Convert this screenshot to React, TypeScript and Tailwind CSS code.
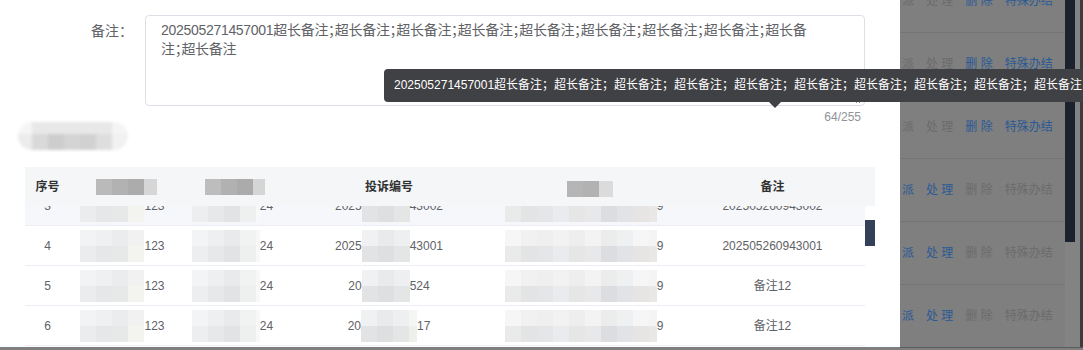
import React from 'react';

type Block = [number, string];

const fontStack = "font-['Liberation_Sans','Noto_Sans_CJK_SC',sans-serif]";

// pixelated redaction blocks, as in the screenshot
const Mosaic = ({ rows, h = 16 }: { rows: Block[][]; h?: number }) => (
  <span className="inline-flex flex-col shrink-0">
    {rows.map((row, i) => (
      <span key={i} className="flex">
        {row.map(([w, c], j) => (
          <span key={j} style={{ width: w, height: h, backgroundColor: c }} />
        ))}
      </span>
    ))}
  </span>
);

const b = (colors: string[], last?: number): Block[] =>
  colors.map((c, i) => [i === colors.length - 1 && last ? last : 16, c]);

const m2: Block[][] = [
  b(['#f2f3f4', '#eff0f1', '#ebeced', '#f1f1f1']),
  b(['#ebecee', '#e6e7e9', '#e7e8e8', '#f3f4ef']),
];
const m3: Block[][] = [
  b(['#f3f4f5', '#eeeff1', '#e9eaec', '#f1f2f2', '#f7f7f7'], 4),
  b(['#edeef0', '#e7e8ea', '#e2e3e5', '#eeefef', '#f8f8f8'], 4),
];
const m4 = (w: number): Block[][] => [
  b(['#f0f1f2', '#e9eaeb', '#eeeff0', '#f5f6f3'], w - 48),
  b(['#e2e3e5', '#dedfe1', '#e4e6e6', '#eef0ec'], w - 48),
];
const m5: Block[][] = [
  b(['#f6f6f7', '#f1f1f2', '#efeff0', '#f2f2f3', '#eeeeef', '#f3f3f4', '#ececed', '#eff0f1', '#f6f6f6', '#f4f4f4'], 8),
  b(['#eaeaeb', '#e3e4e5', '#e5e6e8', '#e9ebee', '#e6e6e7', '#e8e7e9', '#dcdde0', '#e2e3e6', '#e6e5e3', '#e9e8e7'], 8),
];

const colW = ['w-[45px]', 'w-[105px]', 'w-[115px]', 'w-[198px]', 'w-[192px]', 'w-[185px]'];

type Row = { no: string; c4: [string, number, string]; note: string; bg?: boolean };

const rows: Row[] = [
  { no: '3', c4: ['2025', 43, '43002'], note: '202505260943002', bg: true },
  { no: '4', c4: ['2025', 43, '43001'], note: '202505260943001' },
  { no: '5', c4: ['20', 45, '524'], note: '备注12' },
  { no: '6', c4: ['20', 56, '17'], note: '备注12' },
];

type Act = [string, boolean];
const bgRows: Act[][] = [
  [['派', false], ['处 理', false], ['删 除', true], ['特殊办结', true]],
  [['派', false], ['处 理', false], ['删 除', true], ['特殊办结', true]],
  [['派', false], ['处 理', false], ['删 除', true], ['特殊办结', true]],
  [['派', true], ['处 理', true], ['删 除', false], ['特殊办结', false]],
  [['派', true], ['处 理', true], ['删 除', false], ['特殊办结', false]],
  [['派', true], ['处 理', true], ['删 除', false], ['特殊办结', false]],
];

const note =
  '202505271457001' + '超长备注；'.repeat(9) + '超长备注';

export default function App() {
  return (
    <div className={`relative w-[1083px] h-[350px] overflow-hidden flex bg-[#7f7f7f] ${fontStack}`}>
      {/* dialog */}
      <div className="w-[900px] h-[347px] bg-white shrink-0">
        <div className="flex pt-[15px]">
          <div className="w-[145px] pr-[12px] text-right text-[14px] leading-[32px] text-[#606266]">备注：</div>
          <div className="relative w-[720px] h-[91px]">
            <div className="h-full border border-[#dcdfe6] rounded-[4px] px-[15px] py-[5px] text-[14px] leading-[19px] tracking-[-0.3px] text-[#606266] overflow-hidden whitespace-nowrap [font-feature-settings:'halt']">
              <div>202505271457001超长备注；超长备注；超长备注；超长备注；超长备注；超长备注；超长备注；超长备注；超长备</div>
              <div>注；超长备注</div>
            </div>
            <svg className="absolute right-[3px] bottom-[3px]" width="7" height="7" viewBox="0 0 7 7">
              <path d="M7 1 L1 7 M7 4 L4 7" stroke="#8c8c8c" strokeWidth="1" />
            </svg>
            <div className="absolute top-full right-[4px] mt-[1px] text-[12px] leading-[20px] text-[#909399]">64/255</div>
          </div>
        </div>

        <div className="mt-[16px] ml-[18px] w-[110px] h-[28px] rounded-full overflow-hidden blur-[1.5px] flex flex-col">
          <div className="flex h-[12px]">
            <span className="w-[14px] bg-[#f5f5f5]" />
            <span className="w-[80px] bg-[#e8e8e8]" />
            <span className="flex-1 bg-[#f4f4f4]" />
          </div>
          <div className="flex flex-1">
            <span className="w-[14px] bg-[#ececec]" />
            <span className="w-[16px] bg-[#d9d9d9]" />
            <span className="w-[16px] bg-[#cdcdcd]" />
            <span className="w-[16px] bg-[#d4d4d4]" />
            <span className="w-[16px] bg-[#d1d1d1]" />
            <span className="w-[16px] bg-[#dedede]" />
            <span className="flex-1 bg-[#f1f1f1]" />
          </div>
        </div>

        {/* table */}
        <div className="mt-[17px] ml-[25px] w-[850px]">
          <div className="flex h-[39px] bg-[#f5f6f7] text-[12px] font-bold text-[#303133]">
            <div className={`${colW[0]} flex items-center justify-center`}>序号</div>
            <div className={`${colW[1]} flex items-center justify-center pl-[8px]`}>
              <Mosaic rows={[b(['#bababa', '#b2b2b2', '#acacac', '#d6d6d6'], 13)]} />
            </div>
            <div className={`${colW[2]} flex items-center justify-center pl-[5px]`}>
              <Mosaic rows={[b(['#bdbdbd', '#b1b1b1', '#ababab', '#d5d5d5'], 12)]} />
            </div>
            <div className={`${colW[3]} flex items-center justify-center`}>投诉编号</div>
            <div className={`${colW[4]} flex items-center justify-center pl-[12px] pt-[4px]`}>
              <Mosaic rows={[b(['#b5b5b5', '#b2b2b2', '#dbdbdb'], 14)]} />
            </div>
            <div className={`${colW[5]} flex items-center justify-center`}>备注</div>
            <div className="w-[10px]" />
          </div>

          <div className="flex h-[141px] overflow-hidden">
            <div className="w-[840px]">
              <div className="-mt-[20px]">
                {rows.map((r) => (
                  <div
                    key={r.no}
                    className={`flex h-[40px] border-b border-[#ebeef5] text-[12px] text-[#606266] ${r.bg ? 'bg-[#f5f7fa]' : 'bg-white'}`}
                  >
                    <div className={`${colW[0]} flex items-center justify-center`}>{r.no}</div>
                    <div className={`${colW[1]} flex items-center justify-center`}>
                      <Mosaic rows={m2} />
                      <span>123</span>
                    </div>
                    <div className={`${colW[2]} flex items-center justify-center`}>
                      <Mosaic rows={m3} />
                      <span>24</span>
                    </div>
                    <div className={`${colW[3]} flex items-center justify-center`}>
                      <span>{r.c4[0]}</span>
                      <Mosaic rows={m4(r.c4[1])} />
                      <span>{r.c4[2]}</span>
                    </div>
                    <div className={`${colW[4]} flex items-center justify-center`}>
                      <Mosaic rows={m5} />
                      <span>9</span>
                    </div>
                    <div className={`${colW[5]} flex items-center justify-center`}>{r.note}</div>
                  </div>
                ))}
              </div>
            </div>
            <div className="w-[10px] bg-white">
              <div className="mt-[14px] h-[26px] bg-[#334058]" />
            </div>
          </div>
        </div>
      </div>

      {/* page behind the dialog, under the dark mask */}
      <div className="flex h-[348px] border-b border-[#5c5c5c]">
        <div className="w-[165px] overflow-hidden">
          <div className="-mt-[30px]">
            {bgRows.map((acts, i) => (
              <div key={i} className="flex items-center gap-[12px] h-[63px] pl-[2px] border-b border-[#757575] text-[12px] whitespace-pre">
                {acts.map(([t, on], j) => (
                  <span key={j} className={on ? 'text-[#2a5a95]' : 'text-[#6b6b6b]'}>{t}</span>
                ))}
              </div>
            ))}
          </div>
        </div>
        <div className="w-[15px] bg-[#838383]">
          <div className="w-[10px] h-[242px] bg-[#1b212d]" />
        </div>
        <div className="w-[3px] bg-[#3c3c3c]" />
      </div>

      {/* tooltip */}
      <div className="absolute left-[384px] top-[69px] h-[33px] px-[10px] rounded-[4px] bg-[#404144] text-white text-[12px] leading-[33px] whitespace-nowrap">
        {note}
        <span className="absolute left-[385px] top-full w-0 h-0 border-x-[6px] border-x-transparent border-t-[6px] border-t-[#404144]" />
      </div>
    </div>
  );
}
